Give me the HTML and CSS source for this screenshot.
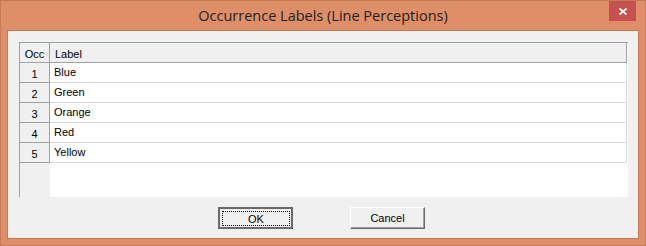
FILE: index.html
```html
<!DOCTYPE html>
<html lang="en">
<head>
  <meta charset="UTF-8" />
  <title>Occurrence Labels (Line Perceptions)</title>
  <link rel="stylesheet" href="styles.css">
</head>
<body>
  <div class="window">
    <div class="titlebar">
      <span></span>
      <div class="title">Occurrence Labels (Line Perceptions)</div>
      <button class="close" title="Close">
        <svg width="8" height="7" viewBox="0 0 8 7">
          <path d="M0.5 0.5 L7.5 6.5 M7.5 0.5 L0.5 6.5" stroke="#fff" stroke-width="1.8" fill="none" />
        </svg>
      </button>
    </div>

    <div class="frame">
      <div class="client">
        <div class="grid">
          <div class="row head">
            <div class="num">Occ</div>
            <div class="label">Label</div>
          </div>
          <div class="row">
            <div class="num">1</div>
            <div class="label">Blue</div>
          </div>
          <div class="row">
            <div class="num">2</div>
            <div class="label">Green</div>
          </div>
          <div class="row">
            <div class="num">3</div>
            <div class="label">Orange</div>
          </div>
          <div class="row">
            <div class="num">4</div>
            <div class="label">Red</div>
          </div>
          <div class="row">
            <div class="num">5</div>
            <div class="label">Yellow</div>
          </div>
          <div class="filler">
            <div class="num-fill"></div>
          </div>
        </div>

        <div class="buttons">
          <button class="btn default"><span class="focus">OK</span></button>
          <button class="btn">Cancel</button>
        </div>
      </div>
    </div>
  </div>
</body>
</html>
```

FILE: styles.css
```css
body {
  margin: 0;
  background: #fff;
  font-family: 'Liberation Sans', Arial, sans-serif;
}

.window {
  width: 646px;
  height: 246px;
  box-sizing: border-box;
  border: 1px solid #c47b55;
  background: #de8f67;
  display: flex;
  flex-direction: column;
}

.titlebar {
  height: 29px;
  flex: none;
  display: grid;
  grid-template-columns: 1fr auto 1fr;
  align-items: start;
}

.title {
  font-family: 'Open Sans', 'Noto Sans', sans-serif;
  font-size: 14.5px;
  color: #1e1e1e;
  line-height: 20px;
  padding-top: 5px;
}

.close {
  justify-self: end;
  margin-right: 9px;
  width: 27px;
  min-width: 27px;
  height: 20px;
  padding: 0;
  border: none;
  background: #c75050;
  display: flex;
  align-items: center;
  justify-content: center;
}

.frame {
  padding: 0 6px 6px 6px;
}

.client {
  height: 207px;
  box-sizing: border-box;
  border: 1px solid #c47b55;
  height: 209px;
  background: #f0f0f0;
  padding: 11px 0 0 11px;
}

.grid {
  width: 608px;
  height: 154px;
  border-left: 1px solid #a0a0a0;
  border-top: 1px solid #a0a0a0;
  background: #fff;
  display: flex;
  flex-direction: column;
  font-size: 11px;
  color: #000;
}

.row {
  display: flex;
  height: 20px;
  flex: none;
}

.num {
  width: 30px;
  height: 20px;
  box-sizing: border-box;
  border-right: 1px solid #a0a0a0;
  border-bottom: 1px solid #a0a0a0;
  background: #f0f0f0;
  text-align: center;
  line-height: 14px;
  padding-top: 4px;
}

.label {
  width: 577px;
  height: 20px;
  box-sizing: border-box;
  border-right: 1px solid #d8d8d8;
  border-bottom: 1px solid #d8d8d8;
  padding: 2px 0 0 4px;
  line-height: 14px;
}

.head .label {
  background: #f0f0f0;
  border-right-color: #a0a0a0;
  border-bottom-color: #a0a0a0;
  padding-top: 4px;
  padding-left: 5px;
}

.filler {
  flex: 1;
  display: flex;
}

.num-fill {
  width: 30px;
  background: #f0f0f0;
}

.buttons {
  display: flex;
  justify-content: center;
  gap: 57px;
  margin: 10px 0 0 -11px;
  padding-right: 3px;
}

.btn {
  width: 75px;
  height: 22px;
  box-sizing: border-box;
  font-family: 'Liberation Sans', Arial, sans-serif;
  font-size: 11px;
  color: #000;
  background: #f0f0f0;
  border: 1px solid;
  border-color: #fff #696969 #696969 #fff;
  box-shadow: inset -1px -1px 0 #a0a0a0;
  padding: 0;
}

.btn.default {
  border: 2px solid #6a6a6a;
  box-shadow: none;
  padding: 2px 1px 1px 2px;
  display: flex;
}

.focus {
  flex: 1;
  border: 1px dotted #000;
  display: flex;
  align-items: center;
  justify-content: center;
}
```
